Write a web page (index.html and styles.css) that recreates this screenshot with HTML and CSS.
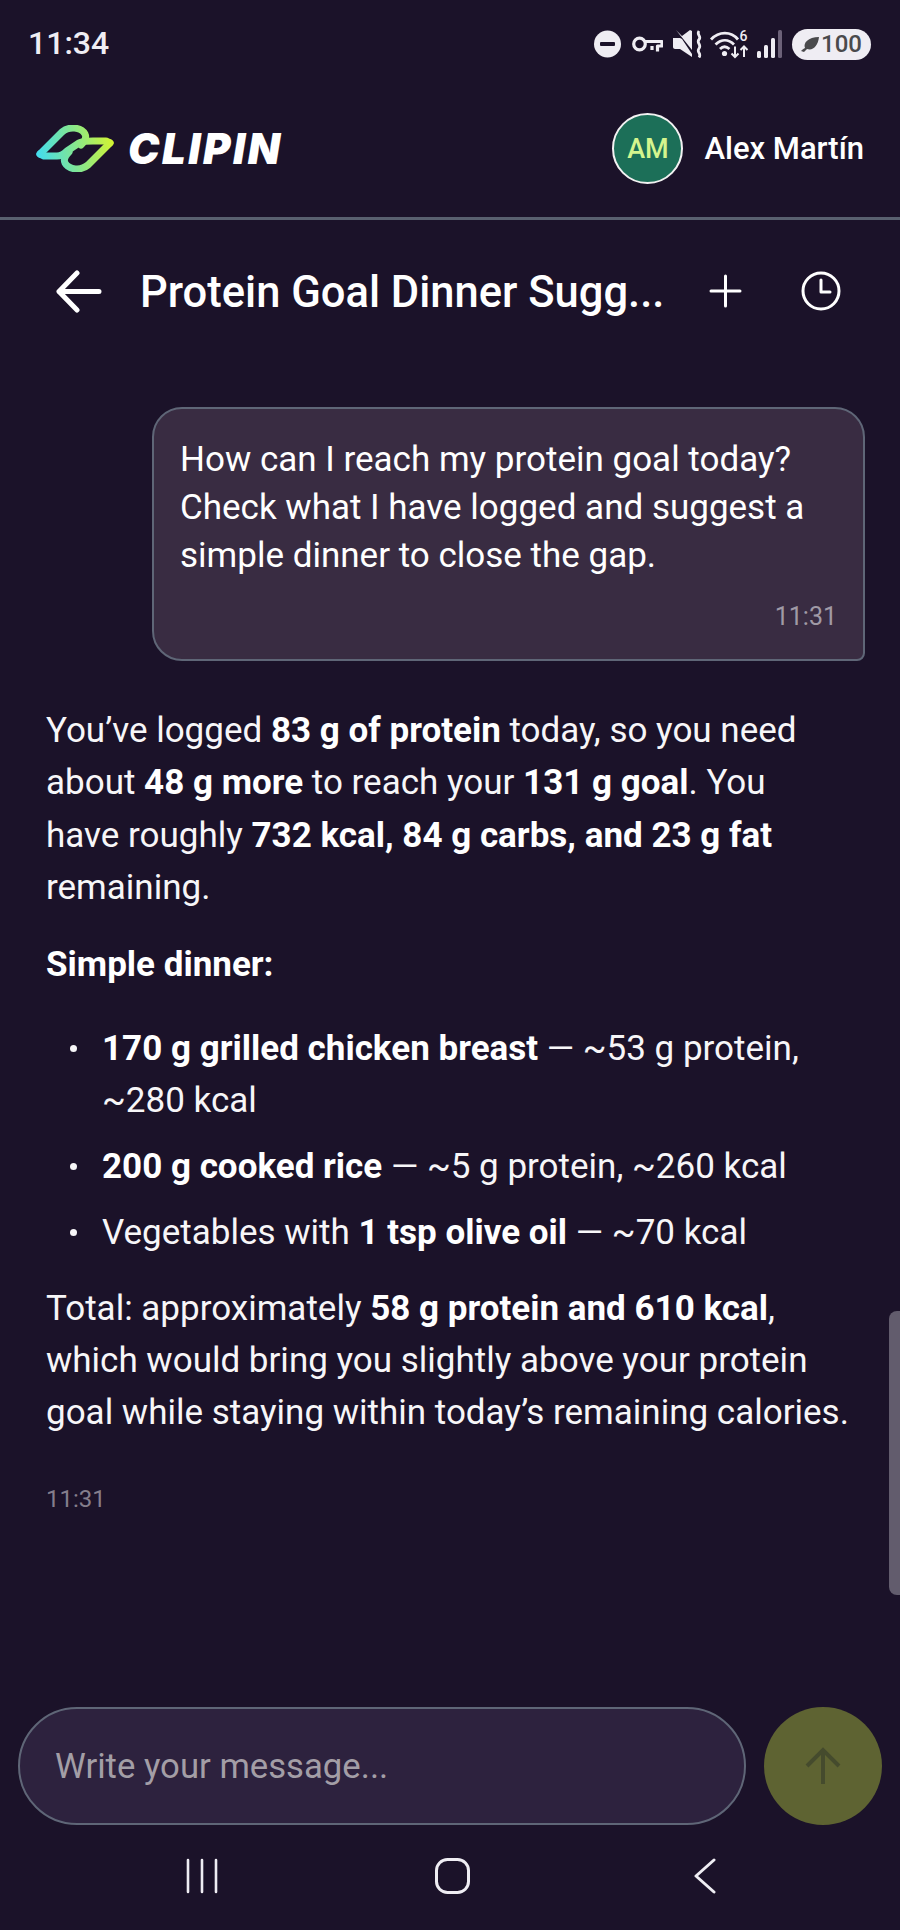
FILE: index.html
```html
<!DOCTYPE html>
<html lang="en">
<head>
    <meta charset="UTF-8">
    <meta name="viewport" content="width=device-width, initial-scale=1.0">
    <title>Clipin Chat</title>
    <link rel="stylesheet" href="styles.css">
</head>
<body>

    <div class="status-bar">
        <span class="clock">11:34</span>
        <div class="status-icons">
            <svg class="icon-dnd" width="27" height="28" viewBox="0 0 27 28"><circle cx="13.500" cy="14" r="13.500" fill="#efedf3"/><rect x="6" y="12" width="15" height="4" rx="1" fill="#1b1229"/></svg>
            <svg class="icon-key" width="31" height="17" viewBox="0 0 31 17" fill="none" stroke="#efedf3" stroke-width="3.200"><circle cx="7.500" cy="8" r="5.800"/><path d="M13 5.500h17v4.500h-4.500v5.500M20 10v4" stroke-linejoin="round"/></svg>
            <svg class="icon-mute" width="30" height="28" viewBox="0 0 30 28" fill="#efedf3"><path d="M0 8h7l2 1 10 15v3L7 19H2c-1 0-2-1-2-2z"/><path d="M3 0l16 20V1l-2-1-8 6z"/><path d="M26 1c-3 4 3 5 0 8.500s3 5 0 9 3 4.500 0 9" fill="none" stroke="#efedf3" stroke-width="2.800"/></svg>
            <svg class="icon-wifi" width="39" height="28" viewBox="0 0 39 28" fill="none" stroke="#efedf3" stroke-width="2.800"><path d="M1 9.500c8-8.500 20-8.500 27 0M5.500 14.500c6-5.500 13-5.500 18.500 0M10 19c3-3 6-3 9.500 0"/><circle cx="14.500" cy="23.500" r="2.600" fill="#efedf3" stroke="none"/><path d="M25 16.500V27m-3.500-3.500l3.500 3.500 3.500-3.500M34 27V16.500m-3.500 3.500l3.500-3.500 3.500 3.500" stroke-width="2"/><text x="29.500" y="11" class="wifi-six">6</text></svg>
            <svg width="26" height="28" viewBox="0 0 26 28"><rect x="0" y="21" width="4" height="7" rx="1.500" fill="#efedf3"/><rect x="7" y="15" width="4" height="13" rx="1.500" fill="#efedf3"/><rect x="14" y="8" width="4" height="20" rx="1.500" fill="#efedf3"/><rect x="21" y="0" width="4" height="28" rx="1.500" fill="#6c6178"/></svg>
            <div class="battery">
                <svg width="18" height="15" viewBox="0 0 18 15"><path d="M0 14c1-1 2-2 4-3C2 6 7 0 18 0c-1 9-6 14-12 12l-3 3z" fill="#4a4a4c"/></svg>
                <span>100</span>
            </div>
        </div>
    </div>

    <header class="app-header">
        <div class="brand">
            <svg width="80" height="47" viewBox="0 0 80 47" fill="none" stroke="url(#logoGrad)" stroke-width="7" stroke-linejoin="round" stroke-linecap="round">
                <defs>
                    <linearGradient id="logoGrad" gradientUnits="userSpaceOnUse" x1="0" y1="32" x2="80" y2="15">
                        <stop offset="0" stop-color="#3fdcf5"/>
                        <stop offset="0.45" stop-color="#7ce59a"/>
                        <stop offset="1" stop-color="#d8f52c"/>
                    </linearGradient>
                </defs>
                <path d="M5 29L9 31H22C26 31 29 29 32 26L44 18C47 16 51 16 58 16H71L75 18"/>
                <path d="M5 29L27 7C34 1 46 2 50 9C52 13 50 16 46 20"/>
                <path d="M75 18L53 40C46 46 34 45 30 38C28 34 30 31 34 27"/>
            </svg>
            <span class="brand-name">CLIPIN</span>
        </div>
        <div class="user">
            <div class="avatar">AM</div>
            <span class="user-name">Alex Martín</span>
        </div>
    </header>

    <div class="chat-title">
        <svg width="46" height="43" viewBox="0 0 46 43" fill="none" stroke="#fff" stroke-width="5" stroke-linecap="round" stroke-linejoin="round"><path d="M21 3L3 21.500 21 40M3 21.500h40"/></svg>
        <h1>Protein Goal Dinner Sugg...</h1>
        <svg class="plus-icon" width="33" height="34" viewBox="0 0 33 34" fill="none" stroke="#fff" stroke-width="3" stroke-linecap="round"><path d="M16.500 2v30M2 17h29"/></svg>
        <svg width="40" height="40" viewBox="0 0 40 40" fill="none" stroke="#fff" stroke-width="3" stroke-linecap="round" stroke-linejoin="round"><circle cx="20" cy="20" r="18"/><path d="M20 9v12h9"/></svg>
    </div>

    <main class="messages">
        <div class="bubble">
            <p>How can I reach my protein goal today? Check what I have logged and suggest a simple dinner to close the gap.</p>
            <div class="bubble-time">11:31</div>
        </div>

        <div class="reply">
            <p>You’ve logged <b>83 g of protein</b> today, so you need about <b>48 g more</b> to reach your <b>131 g goal</b>. You<br>have roughly <b>732 kcal, 84 g carbs, and 23 g fat</b> remaining.</p>
            <p class="reply-head"><b>Simple dinner:</b></p>
            <ul>
                <li><b>170 g grilled chicken breast</b> — ~53 g protein, ~280 kcal</li>
                <li><b>200 g cooked rice</b> — ~5 g protein, ~260 kcal</li>
                <li>Vegetables with <b>1 tsp olive oil</b> — ~70 kcal</li>
            </ul>
            <p>Total: approximately <b>58 g protein and 610 kcal</b>, which would bring you slightly above your protein goal while staying within today’s remaining calories.</p>
            <div class="reply-time">11:31</div>
        </div>
    </main>

    <div class="composer">
        <div class="composer-input">Write your message...</div>
        <button class="send-btn" type="button">
            <svg width="40" height="40" viewBox="0 0 40 40" fill="none" stroke="#454b2d" stroke-width="4"><path d="M20 38V4M4 20L20 4l16 16"/></svg>
        </button>
    </div>

    <nav class="nav-bar">
        <svg width="32" height="36" viewBox="0 0 32 36" fill="none" stroke="#efedf3" stroke-width="2.600" stroke-linecap="round"><path d="M2 2v32M16 2v32M30 2v32"/></svg>
        <svg class="nav-home" width="35" height="36" viewBox="0 0 35 36" fill="none" stroke="#efedf3" stroke-width="3"><rect x="1.500" y="1.500" width="32" height="33" rx="11"/></svg>
        <svg width="24" height="36" viewBox="0 0 24 36" fill="none" stroke="#efedf3" stroke-width="3" stroke-linecap="round" stroke-linejoin="round"><path d="M21 2L3 18l18 16"/></svg>
    </nav>

    <div class="scroll-thumb"></div>

</body>
</html>
```

FILE: styles.css
```css
* {
    box-sizing: border-box;
}

html, body {
    height: 100%;
}

body {
    margin: 0;
    background-color: #1b1229;
    color: #fff;
    font-family: Roboto, "Liberation Sans", sans-serif;
    display: flex;
    flex-direction: column;
    overflow: hidden;
}

p {
    margin: 0;
}

.status-bar {
    height: 84px;
    padding: 0 29px 0 28px;
    display: flex;
    align-items: center;
    justify-content: space-between;
    flex-shrink: 0;
}

.clock {
    font-size: 32px;
    font-weight: 500;
    color: #efedf3;
    padding-top: 1px;
}

.status-icons {
    display: flex;
    align-items: center;
    gap: 9px;
    padding-top: 4px;
}

.icon-dnd {
    margin-right: 2px;
}

.icon-key {
    margin-right: 1px;
}

.icon-mute {
    margin-right: -2px;
}

.icon-wifi {
    margin-right: -1px;
    overflow: visible;
}

.wifi-six {
    font-family: Roboto, sans-serif;
    font-size: 14px;
    font-weight: 500;
    fill: #efedf3;
    stroke: none;
}

.battery {
    width: 79px;
    height: 31px;
    border-radius: 16px;
    background-color: #efedf3;
    color: #4a4a4c;
    font-size: 24px;
    font-weight: 500;
    display: flex;
    align-items: center;
    justify-content: center;
    gap: 2px;
}

.app-header {
    height: 136px;
    padding: 0 36px 5px 35px;
    border-bottom: 3px solid #59606f;
    display: flex;
    align-items: center;
    justify-content: space-between;
    flex-shrink: 0;
}

.brand {
    display: flex;
    align-items: center;
    gap: 13px;
}

.brand-name {
    font-family: Inter, Roboto, sans-serif;
    font-size: 42px;
    font-weight: 900;
    font-style: italic;
    letter-spacing: 2.500px;
}

.user {
    display: flex;
    align-items: center;
    gap: 21px;
}

.avatar {
    width: 71px;
    height: 71px;
    border-radius: 50%;
    background-color: #1c6f58;
    border: 2px solid #f2f2f2;
    color: #d4f58e;
    font-size: 27px;
    font-weight: 500;
    display: flex;
    align-items: center;
    justify-content: center;
    padding-top: 1px;
}

.user-name {
    font-size: 31px;
    font-weight: 500;
    padding-top: 1px;
}

.chat-title {
    height: 142px;
    padding: 0 59px 0 56px;
    display: flex;
    align-items: center;
    flex-shrink: 0;
}

.chat-title h1 {
    margin: 0 0 0 38px;
    padding-top: 3px;
    font-size: 43.500px;
    font-weight: 500;
    flex: 1;
    white-space: nowrap;
}

.plus-icon {
    margin-right: 59px;
}

.messages {
    flex: 1;
    padding: 45px 35px 0 46px;
}

.bubble {
    width: 713px;
    height: 254px;
    margin-left: 106px;
    padding: 27px 26px 0 26px;
    background-color: #392c42;
    border: 2px solid #5f6677;
    border-radius: 30px 30px 8px 30px;
    font-size: 35px;
    line-height: 48px;
}

.bubble-time {
    margin-top: 22px;
    font-size: 25px;
    line-height: 30px;
    text-align: right;
    color: #a09aa6;
}

.reply {
    margin-top: 44px;
    font-size: 35px;
    line-height: 52.400px;
    color: #f7f6f8;
}

.reply b {
    font-weight: 700;
    color: #fff;
}

.reply-head {
    margin-top: 24px;
}

.reply ul {
    margin: 32px 0 23px 0;
    padding: 0 0 0 56px;
    list-style: none;
}

.reply li {
    position: relative;
    margin-bottom: 13.500px;
}

.reply li::before {
    content: "";
    position: absolute;
    left: -32px;
    top: 22px;
    width: 7px;
    height: 7px;
    border-radius: 50%;
    background-color: #f7f6f8;
}

.reply-time {
    margin-top: 44px;
    font-size: 24px;
    line-height: 30px;
    color: #857e8c;
}

.composer {
    padding: 0 18px;
    display: flex;
    align-items: center;
    justify-content: space-between;
    flex-shrink: 0;
}

.composer-input {
    width: 728px;
    height: 118px;
    padding-left: 35px;
    background-color: #2d223e;
    border: 2px solid #5f6677;
    border-radius: 59px;
    color: #a39ea6;
    font-size: 34.700px;
    display: flex;
    align-items: center;
}

.send-btn {
    width: 118px;
    height: 118px;
    border: none;
    border-radius: 50%;
    background-color: #5e6332;
    display: flex;
    align-items: center;
    justify-content: center;
    padding: 0;
}

.nav-bar {
    height: 105px;
    padding: 0 183px 4px 186px;
    display: flex;
    align-items: center;
    justify-content: space-between;
    flex-shrink: 0;
}

.nav-home {
    margin-right: 7px;
}

.scroll-thumb {
    position: absolute;
    top: 1311px;
    right: 0;
    width: 11px;
    height: 284px;
    border-radius: 8px 0 0 8px;
    background-color: #625c6d;
}
```
